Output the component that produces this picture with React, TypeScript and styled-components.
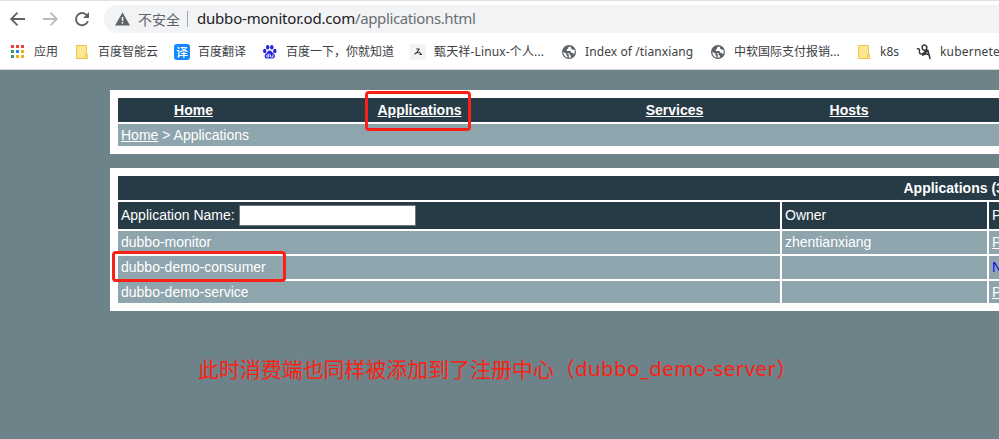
import React from "react";
import styled, { createGlobalStyle } from "styled-components";

const Global = createGlobalStyle`
  * { box-sizing: border-box; }
  html, body { margin: 0; overflow: hidden; }
  body { background: #6d8389; }
`;

const Window = styled.div`
  width: 100vw;
  height: 439px;
  overflow: hidden;
  position: relative;
  background: #6d8389;
  font-family: "Liberation Sans", Arial, sans-serif;
`;

const Chrome = styled.header`
  height: 70px;
  background: #fff;
  border-top: 1px solid #dee1e6;
  border-bottom: 1px solid #d5d9dc;
  font-family: "Noto Sans", "Noto Sans CJK SC", sans-serif;
`;

const Toolbar = styled.div`
  display: flex;
  align-items: center;
  height: 36px;
  padding-left: 8px;
`;

const ToolButton = styled.span`
  display: flex;
  width: 32px;
  height: 20px;
  svg { display: block; }
`;

const AddressBar = styled.div`
  display: flex;
  align-items: center;
  flex: 1;
  height: 28px;
  padding-left: 11px;
  background: #f1f3f4;
  border-radius: 14px 0 0 14px;
  white-space: nowrap;
`;

const Security = styled.span`
  margin-left: 8px;
  padding-bottom: 1px;
  font: 14px/20px "Noto Sans CJK SC", sans-serif;
  color: #5f6368;
`;

const Divider = styled.span`
  width: 1px;
  height: 16px;
  margin: 0 9px 0 7px;
  background: #a0a4a8;
`;

const Url = styled.span`
  padding-bottom: 2px;
  font-size: 15px;
  line-height: 20px;
  letter-spacing: -0.2px;
  color: #202124;
`;

const Path = styled.span`
  color: #6a6e73;
  letter-spacing: -0.38px;
`;

const Bookmarks = styled.div`
  display: flex;
  align-items: center;
  height: 30px;
  padding-left: 10px;
`;

const Bookmark = styled.div<{ $width: number }>`
  display: flex;
  align-items: center;
  gap: 8px;
  flex: 0 0 ${(p) => p.$width}px;
  svg { flex: none; display: block; }
`;

const BookmarkLabel = styled.span<{ $gap?: number }>`
  font-size: 12px;
  line-height: 18px;
  letter-spacing: ${(p) => p.$gap ?? 0}px;
  color: #3c4043;
  white-space: nowrap;
`;

const TranslateBadge = styled.span`
  width: 16px;
  height: 16px;
  border-radius: 3px;
  background: #1487fa;
  color: #fff;
  text-align: center;
  font: 500 12px/15px "Noto Sans CJK SC", sans-serif;
`;

const Page = styled.main`
  display: flex;
  flex-direction: column;
  gap: 14px;
  padding: 20px 0 0 110px;
`;

const Panel = styled.section`
  display: flex;
  flex-direction: column;
  gap: 2px;
  width: 1000px;
  padding: 8px;
  background: #fff;
  font-size: 14px;
  color: #fff;
`;

const Row = styled.div<{ $height: number }>`
  display: grid;
  grid-template-columns: 662px 205px 1fr;
  gap: 2px;
  height: ${(p) => p.$height}px;
`;

const Cell = styled.div<{ $dark?: boolean }>`
  display: flex;
  align-items: center;
  padding: 0 3px 1px;
  background: ${(p) => (p.$dark ? "#263b46" : "#8ea5ae")};
  white-space: nowrap;
`;

const NavRow = styled.nav`
  display: grid;
  grid-template-columns: 151px 301px 209px 140px;
  align-items: center;
  justify-items: center;
  height: 24px;
  background: #263b46;
`;

const Link = styled.a<{ $bold?: boolean }>`
  font-weight: ${(p) => (p.$bold ? 700 : 400)};
  color: inherit;
  text-decoration: underline;
`;

const Crumbs = styled(Cell)`
  height: 22px;
  padding-bottom: 0;
  white-space: pre;
`;

const Heading = styled(Cell)`
  height: 24px;
  padding: 0 0 0 785.5px;
  font-weight: 700;
`;

const Search = styled.input`
  width: 177px;
  height: 21px;
  margin: 1px 0 0 4px;
  padding: 1px 2px;
  border: 1px solid #767676;
  border-radius: 1px;
  background: #fff;
`;

const NoProvider = styled.span`
  color: #0b08f2;
`;

const Highlight = styled.div<{ $x: number; $y: number; $w: number; $h: number }>`
  position: absolute;
  left: ${(p) => p.$x}px;
  top: ${(p) => p.$y}px;
  width: ${(p) => p.$w}px;
  height: ${(p) => p.$h}px;
  border: 3px solid #fb2015;
  border-radius: 4px;
`;

const Note = styled.p`
  margin: 41px 0 0 198px;
  display: flex;
  font: 400 20.95px/32px "Noto Sans CJK SC", sans-serif;
  color: #fd2013;
  white-space: nowrap;
`;

const NoteLatin = styled.span`
  font-family: "Noto Sans", sans-serif;
  font-weight: 400;
  font-size: 20.5px;
  letter-spacing: 0.4px;
`;

const ArrowIcon = ({ color, flip }: { color: string; flip?: boolean }) => (
  <svg width="20" height="20" viewBox="0 0 20 20" fill="none" stroke={color} strokeWidth="1.8">
    <path d={flip ? "M3 10H16M10.5 3.7L16.8 10L10.5 16.3" : "M17 10H4M9.5 3.7L3.2 10L9.5 16.3"} />
  </svg>
);

const ReloadIcon = () => (
  <svg width="20" height="20" viewBox="0 0 20 20">
    <path d="M15.9 12A6.1 6.1 0 1 1 14.2 5.6L15.4 7" fill="none" stroke="#5f6368" strokeWidth="1.9" />
    <path d="M17 3V9H11Z" fill="#5f6368" />
  </svg>
);

const WarningIcon = () => (
  <svg width="15" height="14" viewBox="0 0 15 14">
    <path d="M7.5 .5L15 13.5H0Z" fill="#5f6368" />
    <path d="M7.5 5V9M7.5 10V11.6" stroke="#fff" strokeWidth="1.5" />
  </svg>
);

const AppsIcon = () => {
  const colors = ["#ea4335", "#ea4335", "#ea4335", "#34a058", "#2b8ae8", "#f5ae0a", "#34a058", "#f5ae0a", "#f5ae0a"];
  return (
    <svg width="16" height="16" viewBox="0 0 16 16">
      {colors.map((c, i) => (
        <rect key={i} x={1 + (i % 3) * 5} y={1 + Math.floor(i / 3) * 5} width="3" height="3" fill={c} />
      ))}
    </svg>
  );
};

const FolderIcon = () => (
  <svg width="16" height="16" viewBox="0 0 16 16" fill="#ffe693" stroke="#e8c54b">
    <path d="M2.5 1.5H12.5V14.5H2.5Z" />
    <path d="M11.5 14.5V10.5H13.5V14.5Z" />
  </svg>
);

const PawIcon = () => (
  <svg width="16" height="16" viewBox="0 0 16 16" fill="#2927d9">
    <ellipse cx="2.7" cy="7" rx="1.7" ry="2.2" />
    <ellipse cx="5.7" cy="3.3" rx="1.7" ry="2.3" />
    <ellipse cx="9.8" cy="3.3" rx="1.7" ry="2.3" />
    <ellipse cx="12.8" cy="7" rx="1.7" ry="2.2" />
    <path d="M7.8 6.4C6 6.4 5.5 8.3 3.8 9.7C1.5 11.8 2.9 14.7 5.3 14.6H10.4C12.9 14.7 14 11.8 11.8 9.8C10.2 8.5 9.7 6.4 7.8 6.4Z" />
    <path d="M6.8 9.5V13H5.5Q4.4 13 4.5 11.8Q4.6 10.8 6.8 10.9M8.4 10.5V12.2Q8.4 13 9.3 13H11V10.5" fill="none" stroke="#fff" strokeWidth=".9" />
  </svg>
);

const BlogIcon = () => (
  <svg width="16" height="16" viewBox="0 0 16 16" fill="none" stroke="#393939">
    <path d="M0 0H16V16H0Z" fill="#f3f3f3" stroke="none" />
    <path d="M6.2 5H9L7.6 7.8L4.5 10.3M7 8.5L9 8.7M9.2 8.2L11.5 10.4M9.4 10.5H12" strokeWidth="1.1" />
  </svg>
);

const GlobeIcon = () => (
  <svg width="16" height="16" viewBox="0 0 16 16">
    <circle cx="8" cy="8" r="7" fill="#5f6368" />
    <path
      d="M9.5 2.5Q7 2.5 7 4.3Q7 5.3 5.8 5.5V7H9.2Q10 7.3 10 8.8H11.5Q12.2 8.8 12.5 10.2L13.7 9V6L11.3 5.6L10.2 4.4ZM2.5 7.8V9.2Q3 12.4 6.5 13.6V12Q5.3 11.8 5.4 10.5V9.8ZM7.8 10.2H6.7V9.2H8.6V11.3H9.8V13.4L7.8 13.8Z"
      fill="#fff"
    />
  </svg>
);

const SketchIcon = () => (
  <svg width="16" height="18" viewBox="0 0 16 18" fill="none" stroke="#373737" strokeLinecap="round">
    <path d="M1.5 5.8Q4 5 3.4 8.5Q3.5 12 6.6 10.6L11.8 7.2M8.8 7.5Q5.2 6.5 6.4 3Q8.5 .9 10.6 3.2Q11.4 6.3 8.8 7.5M11.8 7.2L14 15.5M12 7.5L6.3 12.7Q9.5 9.8 13.3 12" strokeWidth="1.5" />
  </svg>
);

const bookmarks = [
  { icon: <AppsIcon />, label: "应用", width: 64 },
  { icon: <FolderIcon />, label: "百度智能云", width: 100 },
  { icon: <TranslateBadge>译</TranslateBadge>, label: "百度翻译", width: 88 },
  { icon: <PawIcon />, label: "百度一下，你就知道", width: 148 },
  { icon: <BlogIcon />, label: "甄天祥-Linux-个人...", width: 151, gap: 0.15 },
  { icon: <GlobeIcon />, label: "Index of /tianxiang", width: 149, gap: 0.1 },
  { icon: <GlobeIcon />, label: "中软国际支付报销...", width: 146 },
  { icon: <FolderIcon />, label: "k8s", width: 60 },
  { icon: <SketchIcon />, label: "kubernetes", width: 100, gap: 0.2 },
];

const applications = [
  { name: "dubbo-monitor", owner: "zhentianxiang", provider: true, height: 23 },
  { name: "dubbo-demo-consumer", owner: "", provider: false, height: 23 },
  { name: "dubbo-demo-service", owner: "", provider: true, height: 22 },
];

export default function App() {
  return (
    <Window>
      <Global />
      <Chrome>
        <Toolbar>
          <ToolButton><ArrowIcon color="#5f6368" /></ToolButton>
          <ToolButton><ArrowIcon color="#babcbe" flip /></ToolButton>
          <ToolButton><ReloadIcon /></ToolButton>
          <AddressBar>
            <WarningIcon />
            <Security>不安全</Security>
            <Divider />
            <Url>dubbo-monitor.od.com<Path>/applications.html</Path></Url>
          </AddressBar>
        </Toolbar>
        <Bookmarks>
          {bookmarks.map((b) => (
            <Bookmark key={b.label} $width={b.width}>
              {b.icon}
              <BookmarkLabel $gap={b.gap}>{b.label}</BookmarkLabel>
            </Bookmark>
          ))}
        </Bookmarks>
      </Chrome>
      <Page>
        <Panel>
          <NavRow>
            {["Home", "Applications", "Services", "Hosts"].map((n) => (
              <Link key={n} $bold>{n}</Link>
            ))}
          </NavRow>
          <Crumbs><Link>Home</Link> &gt; Applications</Crumbs>
        </Panel>
        <Panel>
          <Heading $dark>Applications (3)</Heading>
          <Row $height={27}>
            <Cell $dark>Application Name: <Search /></Cell>
            <Cell $dark>Owner</Cell>
            <Cell $dark>Provider</Cell>
          </Row>
          {applications.map((a) => (
            <Row key={a.name} $height={a.height}>
              <Cell>{a.name}</Cell>
              <Cell>{a.owner}</Cell>
              <Cell>{a.provider ? <Link>Providers</Link> : <NoProvider>No provider</NoProvider>}</Cell>
            </Row>
          ))}
        </Panel>
      </Page>
      <Note>此时消费端也同样被添加到了注册中心（<NoteLatin>dubbo_demo-server</NoteLatin>）</Note>
      <Highlight $x={365} $y={91} $w={106} $h={40} />
      <Highlight $x={112} $y={251} $w={174} $h={31} />
    </Window>
  );
}
